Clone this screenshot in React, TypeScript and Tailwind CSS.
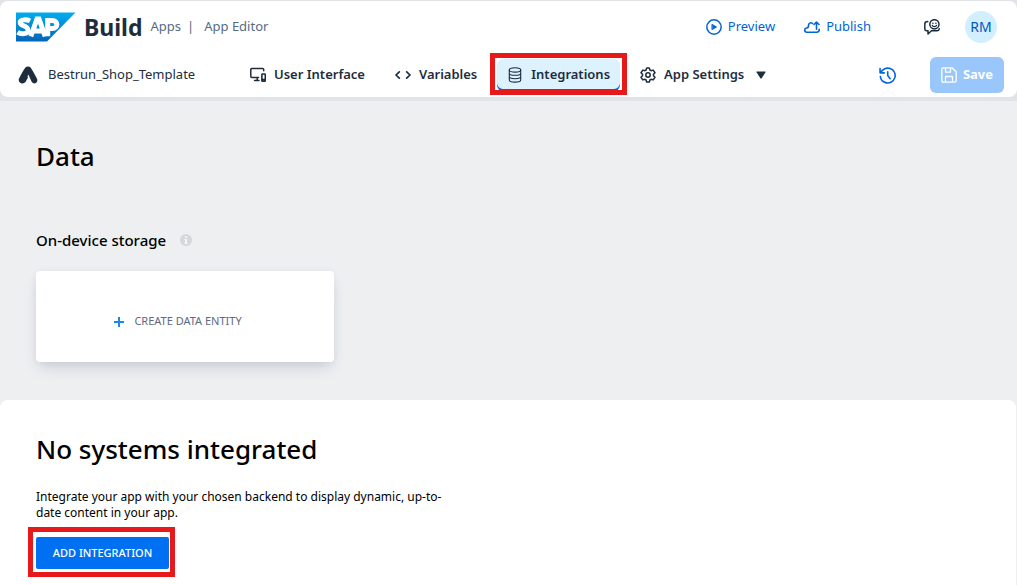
import type { ReactNode } from "react";

function SapLogo() {
  return (
    <svg viewBox="0 0 60 30" className="h-[30px] w-[60px] shrink-0" role="img" aria-label="SAP">
      <defs>
        <linearGradient id="sap" x1="0" y1="0" x2="0" y2="1">
          <stop offset="0" stopColor="#00aeef" />
          <stop offset="1" stopColor="#0364b8" />
        </linearGradient>
      </defs>
      <path d="M0 0.500H59.5L31 29.5H0Z" fill="url(#sap)" />
      <g fill="none" stroke="#fff" strokeWidth="4.800">
        <path d="M14 8.900C11 7.300 4.100 7 4.100 10.600C4.100 14.600 12 13.100 12 18.200C12 22.700 4.700 22.300 1.500 20.200" />
        <path d="M14.800 24.300L21 7H23L29.200 24.300M18.500 19H25.500" strokeWidth="5" />
        <path d="M31.700 24.300V8.500H36.300C42.400 8.500 42.400 16.500 36.300 16.500H32.200" strokeWidth="5" />
      </g>
    </svg>
  );
}

function Icon({ children, className = "size-4" }: { children: ReactNode; className?: string }) {
  return (
    <svg
      viewBox="0 0 16 16"
      className={`shrink-0 ${className}`}
      fill="none"
      stroke="currentColor"
      strokeWidth="1.5"
      strokeLinecap="round"
      strokeLinejoin="round"
      aria-hidden="true"
    >
      {children}
    </svg>
  );
}

const devicesIcon = (
  <Icon>
    <path d="M13.700 3.800V2.500Q13.700 1.500 12.700 1.500H1.800Q0.800 1.500 0.800 2.500V9.500Q0.800 10.500 1.800 10.500H8.500M7.200 10.500V13.500M4.500 13.500H9" />
    <rect x="11.900" y="7" width="3.400" height="7.200" rx="0.500" strokeWidth="1.600" />
    <path d="M12 12.800H15" strokeWidth="2" />
  </Icon>
);

const codeIcon = (
  <Icon>
    <path d="M4.300 4.800L1 8L4.300 11.200M11.700 4.800L15 8L11.700 11.200" strokeWidth="1.700" />
  </Icon>
);

const databaseIcon = (
  <Icon>
    <g strokeWidth="1.100">
      <ellipse cx="8" cy="2.900" rx="5.700" ry="2.200" />
      <path d="M2.300 2.900V13C2.300 15.800 13.700 15.800 13.700 13V2.900M2.300 6.200C2.300 9 13.700 9 13.700 6.200M2.300 9.600C2.300 12.400 13.700 12.400 13.700 9.600" />
    </g>
  </Icon>
);

const gearIcon = (
  <Icon>
    <path d="M6.700 0.900H9.300L9.900 3L11.100 3.700L13.200 3.100L15 5.700L13.500 7.300V8.700L15 10.300L13.200 12.900L11.100 12.300L9.900 13L9.300 15.100H6.700L6.100 13L4.900 12.300L2.800 12.900L1 10.300L2.500 8.700V7.300L1 5.700L2.800 3.100L4.900 3.700L6.100 3Z" />
    <circle cx="8" cy="8" r="2.200" />
  </Icon>
);

function Tab({ icon, label, active = false, menu = false }: { icon: ReactNode; label: string; active?: boolean; menu?: boolean }) {
  const state = active ? "bg-[#dcf2ff] shadow-[inset_0_-2px_0_#0064d9]" : "";
  return (
    <button
      type="button"
      aria-current={active ? "page" : undefined}
      className={`flex h-8 items-center gap-2 rounded-md px-2.5 text-[13px] font-semibold whitespace-nowrap ${state}`}
    >
      {icon}
      {label}
      {menu && (
        <svg viewBox="0 0 10 8" className="ml-1 h-2 w-2.5" fill="currentColor" aria-hidden="true">
          <path d="M1 0.500H9Q10 0.500 9.500 1.300L5.800 7Q5 8 4.200 7L0.500 1.300Q0 0.500 1 0.500Z" />
        </svg>
      )}
    </button>
  );
}

function Header() {
  return (
    <header className="rounded-lg bg-white pr-[13px] pl-4 text-[#1d2d3e]">
      <div className="flex h-[52px] items-center">
        <SapLogo />
        <span className="ml-2 text-[23px] leading-8 font-bold">Build</span>
        <span className="ml-2 text-[13px] text-[#556b82]">Apps</span>
        <span className="ml-1.5 text-[13px] text-[#556b82]">|</span>
        <span className="ml-2.5 text-[13px] text-[#556b82]">App Editor</span>
        <div className="ml-auto flex items-center">
          <button type="button" className="flex items-center gap-1.5 text-[13px] text-[#0064d9]">
            <Icon>
              <circle cx="8" cy="8" r="7.200" />
              <path d="M6.300 5.500L10.500 8L6.300 10.500Z" fill="currentColor" strokeWidth="1" />
            </Icon>
            Preview
          </button>
          <button type="button" className="ml-[29px] flex items-center gap-1.5 text-[13px] text-[#0064d9]">
            <Icon>
              <path d="M8.500 4.400C6.500 2.800 4.500 4.500 4.500 6.500C4.500 8.500 3.800 9 2.500 9C0 9.500 0 13.200 2.800 13.200H12.500C14.500 13.200 15.400 12 15.200 10.200M12.500 10.200V3.500M10 5.500L12.500 3L15 5.500" strokeWidth="1.600" />
            </Icon>
            Publish
          </button>
          <button type="button" aria-label="Feedback" className="ml-[53px]">
            <Icon>
              <g strokeWidth="1.500">
                <circle cx="10.400" cy="5.300" r="4.600" />
                <path d="M8.200 6.300C8.800 8.100 12 8.100 12.600 6.300" strokeWidth="1.200" />
                <path d="M3.800 2.500C1.800 2.500 0.800 3.300 0.800 5V9.500Q0.800 11.800 2.800 11.800H4V15L7.500 11.800H13Q15 11.800 15.200 9.800" />
              </g>
              <circle cx="8.900" cy="4.300" r="0.800" fill="currentColor" stroke="none" />
              <circle cx="11.900" cy="4.300" r="0.800" fill="currentColor" stroke="none" />
            </Icon>
          </button>
          <button type="button" className="mr-[7px] ml-[25px] flex size-8 items-center justify-center rounded-full bg-[#d1efff] text-sm text-[#0057be]">
            RM
          </button>
        </div>
      </div>
      <div className="flex h-11 items-center">
        <div className="flex w-56 items-center text-[13px]">
          <svg viewBox="0 0 20 18" className="ml-0.5 h-[18px] w-5" fill="currentColor" aria-hidden="true">
            <path d="M7.200 1.800Q8.300 0.500 10 0.500T12.800 1.800Q13.800 3 19 12.800Q20.100 15.500 18 17Q15.500 18.200 13.800 16L10.300 8.500L9.500 10.500L10 11.500L7.500 16Q5.800 18 3 17.300Q0.200 16 0.800 13Q5.500 3.800 7.200 1.800Z" />
          </svg>
          <span className="ml-2.5">Bestrun_Shop_Template</span>
        </div>
        <nav className="flex items-center gap-2.5" aria-label="Editor">
          <Tab icon={devicesIcon} label="User Interface" />
          <Tab icon={codeIcon} label="Variables" />
          <div className="relative">
            <Tab icon={databaseIcon} label="Integrations" active />
            <span className="pointer-events-none absolute -inset-x-[7px] -top-1.5 -bottom-1 border-5 border-[#e8191b]" />
          </div>
          <Tab icon={gearIcon} label="App Settings" menu />
        </nav>
        <button type="button" aria-label="History" className="ml-auto text-[#0064d9]">
          <Icon className="size-[17px]">
            <path d="M1 1.500V5.500H5M1.600 5.300C3.200 1.700 7.200 0.300 10.600 1.500C14.200 2.800 16 6.500 14.900 10C13.800 13.600 10 15.800 6.300 14.700C3.500 13.900 1.600 11.600 1.300 9" />
            <path d="M8.200 4.500V8L10.500 11" />
          </Icon>
        </button>
        <button type="button" className="ml-[34px] flex h-9 w-[74px] items-center justify-center gap-1.5 rounded-md bg-[#99c6fb] text-[13px] font-bold text-white">
          <Icon>
            <path d="M2.300 0.800H11L15.200 4.800V13.500Q15.200 15.200 13.500 15.200H2.300Q0.800 15.200 0.800 13.500V2.500Q0.800 0.800 2.300 0.800ZM4.500 1V5.200H9.500V1M4.500 15V9.500H11.500V15" strokeWidth="1.300" />
          </Icon>
          Save
        </button>
      </div>
    </header>
  );
}

export default function App() {
  return (
    <div className="flex min-h-screen flex-col bg-[#edeff1] font-['Noto_Sans',sans-serif] text-black">
      <div className="bg-[#e2e3e7] pt-px pb-1">
        <Header />
      </div>
      <main className="flex grow flex-col">
        <section className="px-9 pt-[35px] pb-[38px]">
          <h1 className="text-[26px] leading-10 font-medium">Data</h1>
          <div className="mt-[52px] flex items-center gap-3.5">
            <h2 className="text-[15px] leading-6 font-medium">On-device storage</h2>
            <svg viewBox="0 0 12 12" className="size-3" role="img" aria-label="Information">
              <circle cx="6" cy="6" r="6" fill="#d5d7db" />
              <path d="M5 2.300H7V4H5ZM4.300 5H7V9H7.700V10H4.300V9H5V6H4.300Z" fill="#f4f5f7" />
            </svg>
          </div>
          <button
            type="button"
            className="mt-[19px] flex h-[91px] w-[298px] items-center justify-center gap-2.5 rounded bg-white pt-2.5 pr-3.5 text-[11px] text-[#5e6983] shadow-[0_8px_14px_-4px_rgba(60,75,110,0.22),0_0_6px_rgba(60,75,110,0.06)]"
          >
            <svg viewBox="0 0 10 10" className="size-2.5" stroke="#1589f0" strokeWidth="2" aria-hidden="true">
              <path d="M5 0V10M0 5H10" />
            </svg>
            CREATE DATA ENTITY
          </button>
        </section>
        <section className="mr-px grow rounded-t-lg bg-white px-9 pt-[29px]">
          <h2 className="text-[26px] leading-10 font-medium">No systems integrated</h2>
          <p className="mt-5 max-w-[420px] text-xs leading-4">
            Integrate your app with your chosen backend to display dynamic, up-to-<wbr />date content in your app.
          </p>
          <div className="relative mt-4 w-fit">
            <button type="button" className="block h-8 w-[133px] rounded-xs bg-[#0070f2] text-[11px] font-medium whitespace-nowrap text-white">
              ADD INTEGRATION
            </button>
            <span className="pointer-events-none absolute -top-2.5 -right-1.5 -bottom-2 -left-2 border-5 border-[#e8191b]" />
          </div>
        </section>
      </main>
    </div>
  );
}
